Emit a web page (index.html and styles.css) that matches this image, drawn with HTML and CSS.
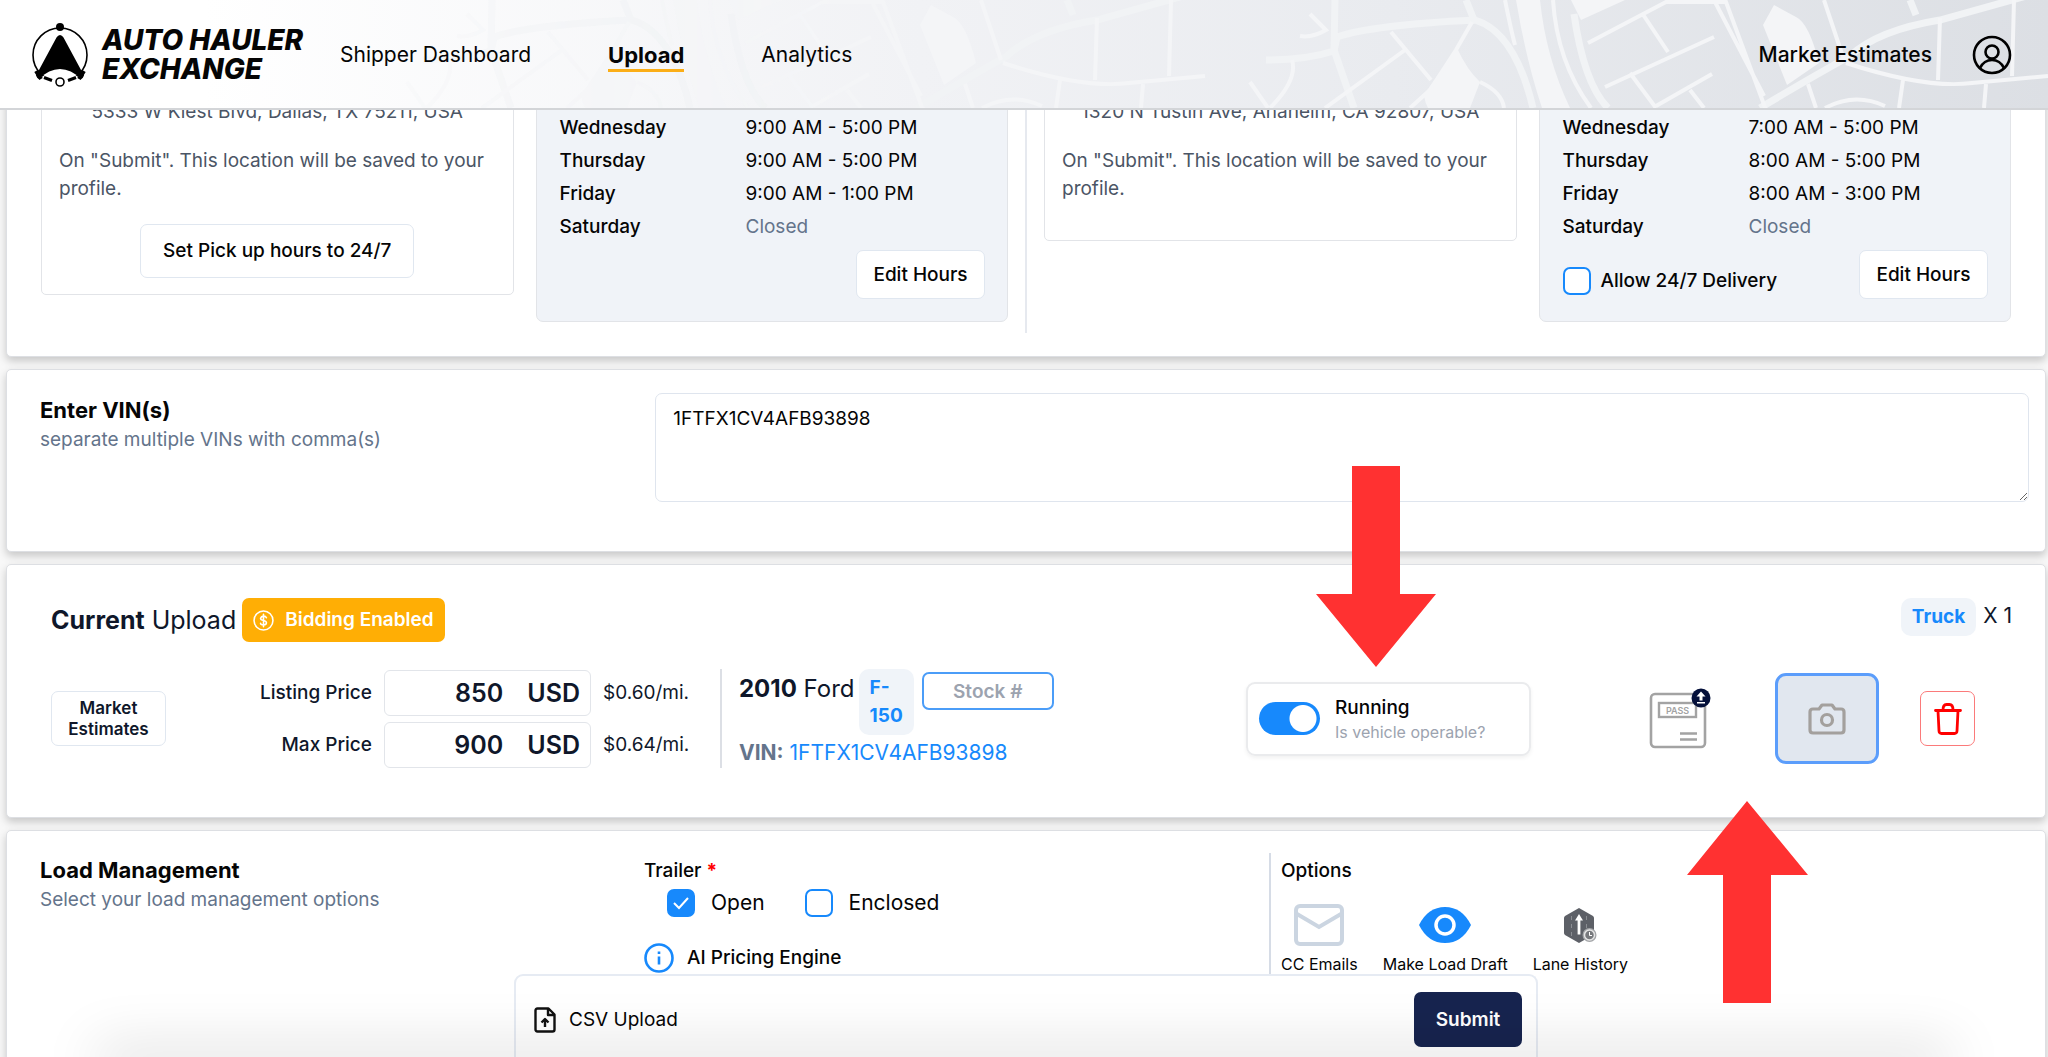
FILE: index.html
```html
<!DOCTYPE html>
<html lang="en">
<head>
<meta charset="utf-8">
<title>Auto Hauler Exchange – Upload</title>
<link rel="stylesheet" href="styles.css">
</head>
<body>
<header class="topbar">
  <svg class="topbar-map" viewBox="0 0 2048 108" preserveAspectRatio="xMaxYMid slice" aria-hidden="true">
    <defs>
      <linearGradient id="fade" x1="0" x2="1" y1="0" y2="0">
        <stop offset="0.1" stop-color="#000"/><stop offset="0.42" stop-color="#fff"/>
      </linearGradient>
      <mask id="fadeMask"><rect width="2048" height="108" fill="url(#fade)"/></mask>
      <g id="roads" fill="none" stroke="#f4f5f7">
        <path d="M1516 0q10 60 26 108h28q-24-50-30-108z" fill="#f4f5f7" stroke="none"/>
        <path d="M1571 0h54l-44 20z" fill="#f4f5f7" stroke="none"/>
        <path d="M1457 48q10 22 23 34l-10 26h-42q-6-12-2-16z" fill="#f4f5f7" stroke="none"/>
        <path d="M1774 5l-11 20 24 60 32-22q-10-40-23-46z" fill="#f4f5f7" stroke="none"/>
        <g stroke-width="7" stroke="#f1f3f5">
          <path d="M1266 60q40 0 68-9l3-14q35-12 138-17 40 12 58 88"/>
          <path d="M1335 0l-1 50 20 58M1466 0l8 20M1574 14q10 70 34 94"/>
          <path d="M1760 108q50-30 90-52 28-26 90-36l108-30M1910 0l6 15"/>
        </g>
        <g stroke-width="4">
          <path d="M1505 0q6 30 10 45M1553 0q4 62 38 108M1310 14l16 16q-14 8-26 6M1391 32l40 48M1472 22l-16 28-26 40-20 18M1405 50l-80 58M1292 60q6 20-22 48M1250 82l18 26M1480 82q22 10 24 26"/>
          <path d="M1588 43l78-41h60l40 108M1605 87l109-50M1642 13l26 39M1630 73l26 35M1656 106l56-32M1714 0l50 96M1690 90l14 18M1824 0l20 60M1846 63q80 26 126 20l76-7M1940 18l-2 62M2014 0l-2 76M1903 80l-4 28M1986 84l-2 24M1808 84l8 24M1825 108q30-16 60-2"/>
        </g>
      </g>
    </defs>
    <g mask="url(#fadeMask)">
      <use href="#roads" x="0"/><use href="#roads" x="-843"/>
    </g>
  </svg>
  <a class="brand" href="#">
    <svg class="brand-mark" viewBox="0 0 58 66" aria-hidden="true">
      <circle cx="29" cy="33" r="27" fill="none" stroke="#000" stroke-width="1.6"/>
      <path d="M12 54l34 0 0 12-34 0z" fill="#fff"/>
      <circle cx="29" cy="5" r="4"/>
      <path d="M29 13q2 0 3.500 2.500l20.500 38q-1 3-3 3.500-10-10-21-10t-21 10q-2-.5-3-3.500l20.500-38q1.500-2.500 3.500-2.500z"/>
      <path d="M5 49l5 8M53 49l-5 8" stroke="#000" stroke-width="4"/>
      <path d="M13 55.500l8 3M45 55.500l-8 3" stroke="#000" stroke-width="3"/>
      <circle cx="29" cy="60" r="4" fill="#fff" stroke="#000" stroke-width="1.6"/>
    </svg>
    <span class="brand-name">AUTO HAULER<br>EXCHANGE</span>
  </a>
  <nav class="nav">
    <a href="#">Shipper Dashboard</a>
    <a href="#" class="active">Upload</a>
    <a href="#">Analytics</a>
  </nav>
  <a class="estimates" href="#">Market Estimates</a>
  <button class="profile" aria-label="Profile">
    <svg viewBox="0 0 40 40" fill="none" stroke="#000" stroke-width="2.6"><circle cx="20" cy="20" r="18"/><circle cx="20" cy="17" r="6.5"/><path d="M8 33q4-8 12-8t12 8"/></svg>
  </button>
</header>

<main>
  <section class="card locations">
    <div class="half">
      <div class="place">
        <p class="address">5333 W Kiest Blvd, Dallas, TX 75211, USA</p>
        <p>On "Submit". This location will be saved to your profile.</p>
        <button class="btn set-hours">Set Pick up hours to 24/7</button>
      </div>
      <div class="hours">
        <table>
          <tr><th scope="row">Wednesday</th><td>9:00 AM - 5:00 PM</td></tr>
          <tr><th scope="row">Thursday</th><td>9:00 AM - 5:00 PM</td></tr>
          <tr><th scope="row">Friday</th><td>9:00 AM - 1:00 PM</td></tr>
          <tr><th scope="row">Saturday</th><td class="closed">Closed</td></tr>
        </table>
        <div class="hours-foot"><button class="btn edit">Edit Hours</button></div>
      </div>
    </div>
    <div class="half">
      <div class="place delivery">
        <p class="address">1320 N Tustin Ave, Anaheim, CA 92807, USA</p>
        <p>On "Submit". This location will be saved to your profile.</p>
      </div>
      <div class="hours">
        <table>
          <tr><th scope="row">Wednesday</th><td>7:00 AM - 5:00 PM</td></tr>
          <tr><th scope="row">Thursday</th><td>8:00 AM - 5:00 PM</td></tr>
          <tr><th scope="row">Friday</th><td>8:00 AM - 3:00 PM</td></tr>
          <tr><th scope="row">Saturday</th><td class="closed">Closed</td></tr>
        </table>
        <div class="hours-foot">
          <label class="allow"><input type="checkbox" class="check">Allow 24/7 Delivery</label>
          <button class="btn edit">Edit Hours</button>
        </div>
      </div>
    </div>
  </section>

  <section class="card vins">
    <div class="intro">
      <h2><label for="vin">Enter VIN(s)</label></h2>
      <p>separate multiple VINs with comma(s)</p>
    </div>
    <textarea id="vin">1FTFX1CV4AFB93898</textarea>
  </section>

  <section class="card upload">
    <div class="upload-head">
      <h2><b>Current</b> Upload</h2>
      <span class="badge">
        <svg viewBox="0 0 20 20" fill="none" stroke="#fff" stroke-width="1.5"><circle cx="10" cy="10" r="9"/><path d="M12.8 7.4q-.6-1.6-2.8-1.6t-2.8 2q0 1.600 2.800 2.200t2.800 2.200q0 2-2.800 2t-2.800-1.600M10 4v12" stroke-linecap="round"/></svg>
        Bidding Enabled
      </span>
      <span class="chip truck">Truck</span>
      <span class="count">X 1</span>
    </div>
    <div class="vehicle-row">
      <button class="btn market">Market Estimates</button>
      <div class="prices">
        <label for="listing">Listing Price</label>
        <div class="money"><input id="listing" type="text" value="850"><span>USD</span></div>
        <span>$0.60/mi.</span>
        <label for="max">Max Price</label>
        <div class="money"><input id="max" type="text" value="900"><span>USD</span></div>
        <span>$0.64/mi.</span>
      </div>
      <div class="vehicle">
        <div class="vehicle-title">
          <h3><b>2010</b> Ford</h3>
          <span class="chip model">F-<br>150</span>
          <input class="stock" type="text" placeholder="Stock #" aria-label="Stock number">
        </div>
        <p class="vin-line"><b>VIN:</b> <a href="#">1FTFX1CV4AFB93898</a></p>
      </div>
      <label class="running">
        <input type="checkbox" class="toggle" checked>
        <span class="running-text">Running<small>Is vehicle operable?</small></span>
      </label>
      <div class="actions">
        <button class="pass" aria-label="Upload gate pass">
          <svg viewBox="0 0 64 64" fill="none"><rect x="2" y="7" width="54" height="53" rx="4" stroke="#a3a3a3" stroke-width="2.600"/><rect x="10" y="16" width="37" height="14" stroke="#a3a3a3" stroke-width="2.400"/><text x="28.500" y="26.500" text-anchor="middle" class="pass-text">PASS</text><path d="M31 46.500h17M31 52.500h17" stroke="#a3a3a3" stroke-width="2.600"/><circle cx="52" cy="11" r="9.500" fill="#04103a"/><path d="M52 4.500l4.500 5h-3v4h-3v-4h-3zM48 15h8v1.500h-8z" fill="#fff"/></svg>
        </button>
        <button class="camera" aria-label="Add photos">
          <svg viewBox="0 0 38 32" fill="none" stroke="#a3a09d" stroke-width="3.200" stroke-linejoin="round"><path d="M2 9q0-3 3-3h6l3-4h10l3 4h6q3 0 3 3v18q0 3-3 3h-28q-3 0-3-3z"/><circle cx="19" cy="17" r="5.500"/></svg>
        </button>
        <button class="trash" aria-label="Remove vehicle">
          <svg viewBox="0 0 28 32" fill="none" stroke="#f00" stroke-width="2.800" stroke-linecap="round" stroke-linejoin="round"><path d="M1.500 7.500h25M4 8l1 20q.2 2.500 2.500 2.500h13q2.300 0 2.500-2.500l1-20M9 7q0-5.500 3.500-5.500h3q3.500 0 3.500 5.500"/></svg>
        </button>
      </div>
    </div>
  </section>

  <section class="card load">
    <div class="intro">
      <h2>Load Management</h2>
      <p>Select your load management options</p>
    </div>
    <fieldset class="trailer">
      <legend>Trailer <span class="required">*</span></legend>
      <div class="choices">
        <label><input type="checkbox" class="check" checked>Open</label>
        <label><input type="checkbox" class="check">Enclosed</label>
      </div>
      <p class="engine">
        <svg viewBox="0 0 30 30" fill="none" stroke="#1789fc" stroke-width="2.600"><circle cx="15" cy="15" r="13.500"/><path d="M15 13.500v8M15 8.500v2.400"/></svg>
        AI Pricing Engine
      </p>
    </fieldset>
    <div class="options">
      <h3>Options</h3>
      <div class="option-list">
        <button class="option">
          <svg width="50" height="42" viewBox="0 0 50 42" fill="none" stroke="#cbd5e1" stroke-width="4"><rect x="2" y="2" width="46" height="38" rx="4"/><path d="M3 10l22 13 22-13"/></svg>
          CC Emails
        </button>
        <button class="option">
          <svg width="52" height="42" viewBox="0 0 52 42"><path d="M0 21q9-18 26-18t26 18q-9 18-26 18t-26-18z" fill="#1789fc"/><circle cx="26" cy="21" r="9" fill="#1789fc" stroke="#fff" stroke-width="3.500"/></svg>
          Make Load Draft
        </button>
        <button class="option">
          <svg width="34" height="42" viewBox="0 0 34 42"><path d="M16 4l14 8q1 1 1 2v15q0 1-1 2l-14 8-14-8q-1-1-1-2v-15q0-1 1-2z" fill="#5d6067"/><path d="M8.500 12v22M23.500 12v18" stroke="#8a8d92" stroke-width="1" stroke-dasharray="4 4"/><path d="M16 10l4 6.500h-2.600v14h-2.800v-14h-2.600z" fill="#fff"/><circle cx="26.500" cy="31" r="7" fill="#a3a5a8"/><circle cx="26.500" cy="31" r="5" fill="#77797d" stroke="#e5e5e5" stroke-width="1.500"/><path d="M26.500 28v3.500h2.500" stroke="#fff" fill="none"/></svg>
          Lane History
        </button>
      </div>
    </div>
  </section>
</main>

<div class="submit-bar">
  <button class="csv">
    <svg viewBox="0 0 22 26" fill="none" stroke="#111" stroke-width="2.400" stroke-linejoin="round"><path d="M3.500 1.500h11l6 6v15q0 2-2 2h-15q-2 0-2-2v-19q0-2 2-2zM14 2v6h6M11 20v-7M7.500 15.500l3.500-3.500 3.500 3.500"/></svg>
    CSV Upload
  </button>
  <button class="submit">Submit</button>
</div>
<div class="bottom-shade"></div>

<svg class="pointer pointer-down" viewBox="0 0 120 201" aria-hidden="true"><path d="M36 0h48v128h36l-60 73-60-73h36z" fill="#ff3131"/></svg>
<svg class="pointer pointer-up" viewBox="0 0 121 202" aria-hidden="true"><path d="M60 0l61 74h-37v128h-48v-128h-36z" fill="#ff3131"/></svg>
</body>
</html>
```
FILE: styles.css
```css
* { box-sizing: border-box; }

body {
  margin: 0;
  height: 100vh;
  overflow: hidden;
  position: relative;
  background: #f8f8f8;
  color: #050505;
  font-family: Inter, "Liberation Sans", sans-serif;
  font-size: 19px;
  line-height: 28px;
}

h2, h3, p { margin: 0; font-weight: inherit; }
a { color: inherit; text-decoration: none; }
button, input, textarea { font: inherit; color: inherit; }
button { background: none; border: 0; padding: 0; }
svg { display: block; }

.topbar {
  position: relative;
  z-index: 2;
  height: 110px;
  padding: 2px 36px 0 31px;
  display: flex;
  align-items: center;
  background: linear-gradient(90deg, #fff 10%, #f1f2f5 45%, #e9ebef 68%, #dcdfe4);
  border-bottom: 2px solid #d3d5d8;
  font-size: 21px;
}
.topbar-map { position: absolute; inset: 0; width: 100%; height: 100%; }
.topbar > :not(.topbar-map) { position: relative; }
.brand { display: flex; align-items: center; gap: 13px; width: 309px; }
.brand-mark { width: 58px; height: 66px; }
.brand-name { font: italic 800 28px/29px Inter, sans-serif; white-space: nowrap; }
.nav { display: flex; gap: 77px; }
.nav .active { font-size: 22px; font-weight: 700; border-bottom: 3px solid #fbae17; margin-bottom: -3px; }
.estimates { margin-left: auto; font-weight: 500; }
.profile { width: 40px; height: 40px; margin-left: 40px; }

main { padding: 0 2px 0 6px; display: flex; flex-direction: column; gap: 12px; }
.card {
  background: #fff;
  border: 1px solid #dddfe3;
  border-radius: 5px;
  box-shadow: 0 4px 8px rgba(0, 0, 0, .2);
}

.btn {
  background: #fff;
  border: 1px solid #e0e7f0;
  border-radius: 7px;
  font-weight: 500;
}

/* pick up and delivery */
.locations { margin-top: -19px; padding: 0 34px 23px 34px; display: flex; }
.half { flex: 1; display: grid; grid-template-columns: 1fr 1fr; gap: 22px; align-items: start; padding-bottom: 11px; }
.half + .half { border-left: 2px solid #e6e9ef; padding-left: 17px; }
.half:first-child { padding-right: 17px; }
.place { border: 1px solid #e2e4e8; border-radius: 5px; padding: 5px 17px 16px; color: #4b5565; display: flex; flex-direction: column; gap: 21px; }
.place.delivery { padding-bottom: 37px; }
.address { text-align: center; }
.set-hours { align-self: center; height: 54px; padding: 0 22px; color: #050505; }
.hours { background: #f0f3f8; border: 1px solid #e2e4e8; border-radius: 7px; padding: 18px 22px 22px 23px; }
.hours table { border-collapse: collapse; }
.hours th, .hours td { padding: 0; height: 33px; text-align: left; font-weight: 400; }
.hours th { width: 186px; font-weight: 500; }
.hours .closed { color: #64748b; }
.hours-foot { display: flex; margin-top: 7px; height: 49px; }
.edit { height: 49px; width: 129px; margin-left: auto; }
.allow { display: flex; align-items: center; gap: 10px; padding-top: 12px; font-weight: 500; }

.check {
  appearance: none;
  margin: 0;
  width: 28px;
  height: 28px;
  border: 2px solid #1789fc;
  border-radius: 7px;
  background: #fff;
}
.check:checked {
  background: #1789fc url("data:image/svg+xml,%3Csvg xmlns='http://www.w3.org/2000/svg' viewBox='0 0 24 24'%3E%3Cpath d='M5 12l5 5 9-10' fill='none' stroke='white' stroke-width='2'/%3E%3C/svg%3E") center / 24px no-repeat;
}

/* headings used beside forms */
.intro h2 { font-size: 22px; font-weight: 700; }
.intro p { color: #64748b; margin-top: 2px; }

.vins { padding: 23px 16px 49px 33px; display: grid; grid-template-columns: 615fr 1373fr; }
.vins .intro { padding-top: 3px; }
.vins textarea { display: block; height: 109px; border: 1px solid #dfe5ee; border-radius: 7px; padding: 11px 17px; outline: 0; background: #fff; }

/* current upload */
.upload { padding: 33px 33px 49px 44px; color: #0f172a; }
.upload-head { display: flex; align-items: center; height: 44px; }
.upload-head h2 { font-size: 25px; }
.badge { margin-left: 6px; height: 44px; padding: 0 11px; display: flex; align-items: center; gap: 11px; background: #ffae05; border-radius: 7px; color: #fff; font-weight: 600; }
.badge svg { width: 21px; height: 21px; }
.chip { background: #f0f4f9; color: #1789fc; border-radius: 10px; font-weight: 700; padding: 5px 11px; }
.truck { margin-left: auto; align-self: flex-start; }
.count { margin-left: 7px; padding-top: 4px; align-self: flex-start; font-size: 21px; }

.vehicle-row { display: flex; align-items: center; margin-top: 27px; height: 99px; }
.market { width: 115px; height: 55px; font-size: 17px; line-height: 21px; font-weight: 600; }
.prices { display: grid; grid-template-columns: 206px 207px 83px; column-gap: 12px; row-gap: 6px; align-items: center; }
.prices label { text-align: right; font-weight: 500; }
.money { display: flex; align-items: center; height: 46px; border: 1px solid #e2e5ea; border-radius: 6px; font-size: 25px; font-weight: 600; padding: 1px 10px 0 0; gap: 24px; }
.money input { flex: 1; min-width: 0; border: 0; padding: 0; text-align: right; outline: 0; background: none; }
.vehicle { align-self: stretch; margin-left: 34px; border-left: 2px solid #dcdfe5; padding-left: 17px; }
.vehicle-title { display: flex; align-items: flex-start; height: 67px; }
.vehicle-title h3 { font-size: 24px; padding-top: 6px; white-space: nowrap; }
.model { margin-left: 4px; }
.stock { width: 132px; height: 38px; margin: 3px 0 0 8px; border: 2px solid #4b9df8; border-radius: 7px; text-align: center; font-weight: 600; background: #fff; }
.stock::placeholder { color: #9ca3af; opacity: 1; }
.vin-line { font-size: 21px; color: #64748b; padding-top: 3px; }
.vin-line a { color: #1789fc; }
.running { margin-left: auto; width: 285px; height: 74px; display: flex; align-items: center; gap: 15px; padding-left: 11px; border: 2px solid #eaebed; border-radius: 9px; box-shadow: 0 2px 4px rgba(0, 0, 0, .06); }
.running-text { color: #050505; line-height: 24px; font-weight: 500; padding-top: 3px; }
.running-text small { display: block; font-size: 16px; font-weight: 400; color: #9ca3af; }
.toggle { appearance: none; margin: 0; width: 61px; height: 33px; border-radius: 17px; background: radial-gradient(circle at 44px 50%, #fff 13px, #1789fc 14px); }
.actions { display: flex; align-items: center; margin: 0 37px 0 118px; }
.pass { width: 64px; height: 64px; }
.pass-text { font: 600 9px Inter, sans-serif; fill: #a3a3a3; }
.camera { width: 104px; height: 91px; margin-left: 62px; display: grid; place-items: center; background: #e1e7ef; border: 3px solid #5b9dfb; border-radius: 11px; }
.camera svg { width: 38px; height: 32px; }
.trash { width: 55px; height: 55px; margin-left: 41px; display: grid; place-items: center; border: 1px solid #fb7a7a; border-radius: 7px; }
.trash svg { width: 28px; height: 32px; }

/* load management */
.load { height: 260px; padding: 22px 35px 0 33px; display: grid; grid-template-columns: 604fr 625fr 741fr; }
.load .intro { padding-top: 3px; }
.trailer { margin: 0; border: 0; padding: 0; font-weight: 500; }
.trailer legend { padding: 4px 0 0; }
.required { color: #f00; font-weight: 700; }
.choices { display: flex; gap: 40px; margin: 4px 0 0 23px; font-size: 21px; font-weight: 400; }
.choices label { display: flex; align-items: center; gap: 16px; }
.engine { display: flex; align-items: center; gap: 13px; margin-top: 26px; }
.engine svg { width: 30px; height: 30px; }
.options { border-left: 2px solid #d6dce6; padding: 4px 0 0 10px; }
.options h3 { font-size: 19px; font-weight: 500; }
.option-list { display: flex; gap: 25px; margin-top: 19px; }
.option { display: flex; flex-direction: column; align-items: center; gap: 5px; font-size: 16px; line-height: 26px; }

.submit-bar {
  position: absolute;
  bottom: 0;
  left: 25%;
  width: 50%;
  margin-left: 2px;
  height: 83px;
  padding: 16px 14px 0 18px;
  display: flex;
  justify-content: space-between;
  align-items: flex-start;
  background: #fff;
  border: 2px solid #e6ebf3;
  border-bottom: 0;
  border-radius: 9px 9px 0 0;
}
.csv { display: flex; align-items: center; gap: 13px; height: 56px; }
.csv svg { width: 22px; height: 26px; }
.submit { width: 108px; height: 55px; background: #17244f; border-radius: 7px; color: #fff; font-weight: 600; }
.bottom-shade {
  position: absolute;
  inset: auto 110px 0;
  height: 0;
  box-shadow: 0 4px 56px 14px rgba(0, 0, 0, .15);
  pointer-events: none;
}

.pointer { position: absolute; z-index: 3; }
.pointer-down { left: 1316px; top: 466px; width: 120px; height: 201px; }
.pointer-up { left: 1687px; top: 801px; width: 121px; height: 202px; }
```
